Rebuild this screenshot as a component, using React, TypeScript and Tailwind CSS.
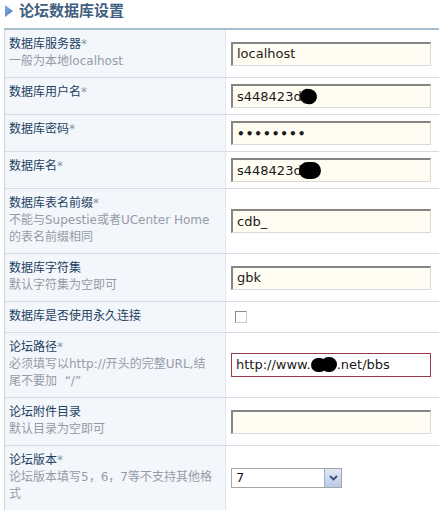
import React from "react";

const cjk = '"DejaVu Sans", "Noto Sans CJK SC", sans-serif';

type Row = {
  label: string;
  star?: boolean;
  sub?: string[];
  field: React.ReactNode;
};

function Blob({ w, h, className = "" }: { w: number; h: number; className?: string }) {
  return (
    <span
      className={"inline-block bg-black rounded-full align-middle " + className}
      style={{ width: w, height: h }}
    />
  );
}

function Field({
  children,
  red = false,
}: {
  children?: React.ReactNode;
  red?: boolean;
}) {
  return (
    <div
      className={
        "w-[200px] h-[24px] flex items-center pl-[4px] text-[13px] text-[#1a1a1a] whitespace-nowrap overflow-hidden " +
        (red
          ? "border border-[#9c3a4c] bg-white"
          : "bg-[#fffdf2] border-t-2 border-l-2 border-t-[#858585] border-l-[#858585] border-b border-r border-b-[#d9d9d9] border-r-[#d9d9d9]")
      }
      style={{ fontFamily: '"DejaVu Sans", sans-serif' }}
    >
      {children}
    </div>
  );
}

const rows: Row[] = [
  {
    label: "数据库服务器",
    star: true,
    sub: ["一般为本地localhost"],
    field: <Field>localhost</Field>,
  },
  {
    label: "数据库用户名",
    star: true,
    field: (
      <Field>
        s448423d
        <Blob w={17} h={15} className="-ml-[2px] rotate-12" />
      </Field>
    ),
  },
  {
    label: "数据库密码",
    star: true,
    field: (
      <Field>
        <span className="text-[12px] tracking-[1px] font-bold">••••••••</span>
      </Field>
    ),
  },
  {
    label: "数据库名",
    star: true,
    field: (
      <Field>
        s448423d
        <Blob w={22} h={17} className="-ml-[3px]" />
      </Field>
    ),
  },
  {
    label: "数据库表名前缀",
    star: true,
    sub: ["不能与Supestie或者UCenter Home", "的表名前缀相同"],
    field: <Field>cdb_</Field>,
  },
  {
    label: "数据库字符集",
    sub: ["默认字符集为空即可"],
    field: <Field>gbk</Field>,
  },
  {
    label: "数据库是否使用永久连接",
    field: (
      <span className="ml-[4px] w-[12px] h-[12px] bg-white border border-t-[#8a8a8a] border-l-[#8a8a8a] border-b-[#c8c8c8] border-r-[#c8c8c8]" />
    ),
  },
  {
    label: "论坛路径",
    star: true,
    sub: ["必须填写以http://开头的完整URL,结", "尾不要加  “/”"],
    field: (
      <Field red>
        http://www.
        <span className="inline-flex items-center">
          <Blob w={16} h={14} />
          <Blob w={16} h={15} className="-ml-[6px] -mt-[2px]" />
        </span>
        .net/bbs
      </Field>
    ),
  },
  {
    label: "论坛附件目录",
    sub: ["默认目录为空即可"],
    field: <Field />,
  },
  {
    label: "论坛版本",
    star: true,
    sub: ["论坛版本填写5，6，7等不支持其他格", "式"],
    field: (
      <div
        className="w-[111px] h-[20px] flex border border-[#a5a5a5] bg-white text-[13px] text-[#1a1a1a]"
        style={{ fontFamily: '"DejaVu Sans", sans-serif' }}
      >
        <span className="flex-1 pl-[4px] leading-[18px]">7</span>
        <span className="w-[17px] h-full flex items-center justify-center border-l border-[#9fb2cc] bg-gradient-to-b from-[#dfe8f7] to-[#b9cbe6]">
          <svg width="9" height="6" viewBox="0 0 9 6">
            <path d="M1 1 L4.5 4.5 L8 1" stroke="#39507a" strokeWidth="1.8" fill="none" />
          </svg>
        </span>
      </div>
    ),
  },
];

export default function App() {
  return (
    <div className="w-[439px] h-[510px] bg-white overflow-hidden" style={{ fontFamily: cjk }}>
      <div className="h-[22px] flex items-center pl-[5px] gap-[6px]">
        <svg width="8" height="12" viewBox="0 0 8 12">
          <defs>
            <linearGradient id="tri" x1="0" y1="0" x2="1" y2="1">
              <stop offset="0" stopColor="#8ab6e6" />
              <stop offset="1" stopColor="#3b72b8" />
            </linearGradient>
          </defs>
          <path d="M0 0 L8 6 L0 12 Z" fill="url(#tri)" />
        </svg>
        <span className="text-[15px] font-bold text-[#41607f] leading-[22px]">论坛数据库设置</span>
      </div>
      <div className="mt-[6px] ml-[4px] border-t-2 border-t-[#a7bccd] border-l border-l-[#c9d5e0]">
        {rows.map((r, i) => (
          <div key={i} className="flex border-b border-[#d5dee7]">
            <div className="w-[221px] shrink-0 bg-[#f3f6fb] border-r border-[#e0e7ef] pl-[4px] pt-[5px] pb-[7px]">
              <div className="text-[12px] leading-[18px] text-[#1d4262] whitespace-nowrap">
                {r.label}
                {r.star && <span className="text-[#8795a3]">*</span>}
              </div>
              {r.sub?.map((s, j) => (
                <div key={j} className="text-[12px] leading-[17px] text-[#959ca6] whitespace-pre">
                  {s}
                </div>
              ))}
            </div>
            <div className="flex-1 flex items-center pl-[5px] py-[6px]">{r.field}</div>
          </div>
        ))}
      </div>
    </div>
  );
}
